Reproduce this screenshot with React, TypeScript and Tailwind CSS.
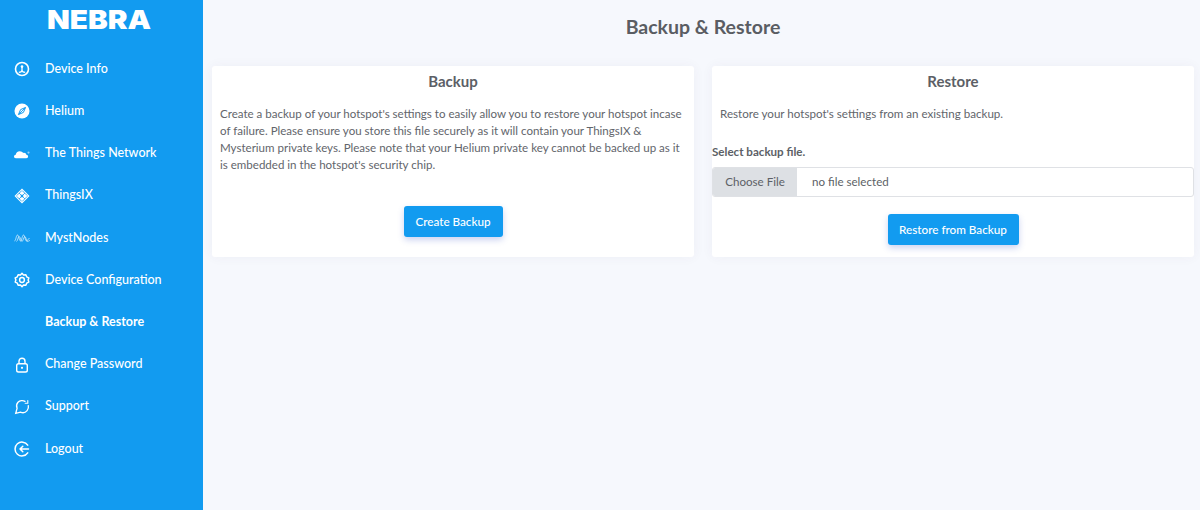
import React from "react";

const font = { fontFamily: 'Lato, sans-serif' };

function Gauge() {
  return (
    <svg width="16" height="16" viewBox="0 0 16 16" fill="none">
      <circle cx="8" cy="8" r="6.500" stroke="#fff" strokeWidth="1.600" />
      <circle cx="8" cy="5.600" r="1.300" fill="#fff" />
      <path d="M8 6v3.200c0 1.100-1.400 2-3.200 2.200M8 9.200c0 1.100 1.400 2 3.200 2.200" stroke="#fff" strokeWidth="1.300" />
    </svg>
  );
}
function Compass() {
  return (
    <svg width="16" height="16" viewBox="0 0 16 16">
      <circle cx="8" cy="8" r="7.500" fill="#fff" />
      <path d="M11.600 4.400 9.400 9.400 4.400 11.600 6.600 6.600Z" fill="none" stroke="#129bf0" strokeWidth="1" />
      <path d="M5 11 11 5" stroke="#129bf0" strokeWidth="0.900" />
    </svg>
  );
}
function Cloud() {
  return (
    <svg width="16" height="16" viewBox="0 0 16 16">
      <path d="M1.800 13.200C.7 13.200 0 12.400 0 11.500c0-.9.700-1.700 1.700-1.800C2 8 3.400 6.200 5.800 6.200c1.500 0 2.700.7 3.300 1.800.3-.1.600-.2.900-.2 1.200 0 2.200.9 2.400 2 1 .1 1.700.8 1.700 1.700 0 .9-.7 1.700-1.800 1.700Z" fill="#fff" />
      <circle cx="14.500" cy="7.600" r="1.100" fill="#fff" fillOpacity="0.55" />
    </svg>
  );
}
function Diamonds() {
  return (
    <svg width="16" height="16" viewBox="0 0 16 16">
      <path d="M8 0.500 15.500 8 8 15.500 0.500 8Z" fill="#fff" />
      <path d="M5 5 11 11M8.300 2.700 13.300 7.700M2.700 8.300 7.700 13.300M11 5 5 11M7.700 2.700 2.700 7.700M13.300 8.300 8.300 13.300" stroke="#129bf0" strokeWidth="0.800" />
      <path d="M8 6.300 9.700 8 8 9.700 6.300 8Z" fill="#129bf0" />
    </svg>
  );
}
function Wave() {
  return (
    <svg width="17" height="16" viewBox="0 0 17 16" fill="none" stroke="#fff" strokeOpacity="0.6" strokeWidth="1">
      <path d="M0.500 11c1.500 0 1.500-6 3-6s1.500 6 3 6 1.500-6 3-6 1.500 6 3 6 1.500-3 3-2.500" />
      <path d="M2.500 11.500c1 0 1.500-5 2.700-5s1.500 5 2.800 5 1.500-5 2.800-5 1.500 5 2.700 5 1-1 2.500-1" />
    </svg>
  );
}
function Gear() {
  return (
    <svg width="16" height="16" viewBox="0 0 24 24" fill="none" stroke="#fff" strokeWidth="2.200" strokeLinejoin="round">
      <path d="M12 1.800l2.300 2.700 3.500-.5 1.200 3.300 3.200 1.600-1 3.100 1 3.100-3.200 1.600-1.200 3.300-3.500-.5L12 22.200l-2.300-2.700-3.500.5L5 16.700l-3.200-1.600 1-3.100-1-3.100L5 7.300l1.200-3.300 3.500.5z" />
      <circle cx="12" cy="12" r="3.600" />
    </svg>
  );
}
function Lock() {
  return (
    <svg width="16" height="16" viewBox="0 0 16 16" fill="none" stroke="#fff" strokeWidth="1.400">
      <rect x="2.700" y="6.700" width="10.600" height="8.300" rx="1.800" />
      <path d="M5 6.700V4.200a3 3 0 0 1 6 0v2.500" />
      <circle cx="8" cy="10.800" r="1.100" fill="#fff" stroke="none" />
    </svg>
  );
}
function Support() {
  return (
    <svg width="16" height="16" viewBox="0 0 16 16" fill="none" stroke="#fff" strokeWidth="1.300" strokeLinecap="round">
      <path d="M11 2.400C9 1 5.800 1.300 4 3.300 2.500 5 2.300 7.600 3.100 9.300L1.700 14.300l4.800-1.200c2.200 1 5 .4 6.600-1.500 1.200-1.400 1.600-3.200 1.200-5" />
      <path d="M13.800 1.600v2.600h-2.600" strokeWidth="1.100" />
    </svg>
  );
}
function Logout() {
  return (
    <svg width="16" height="16" viewBox="0 0 16 16" fill="none" stroke="#fff" strokeWidth="1.500" strokeLinecap="round" strokeLinejoin="round">
      <path d="M13.700 4.200A6.900 6.900 0 1 0 13.700 11.800" />
      <path d="M14.500 8H6M8.800 5.200 6 8l2.800 2.800" />
    </svg>
  );
}

const items: { label: string; icon?: React.ReactNode; active?: boolean }[] = [
  { label: "Device Info", icon: <Gauge /> },
  { label: "Helium", icon: <Compass /> },
  { label: "The Things Network", icon: <Cloud /> },
  { label: "ThingsIX", icon: <Diamonds /> },
  { label: "MystNodes", icon: <Wave /> },
  { label: "Device Configuration", icon: <Gear /> },
  { label: "Backup & Restore", active: true },
  { label: "Change Password", icon: <Lock /> },
  { label: "Support", icon: <Support /> },
  { label: "Logout", icon: <Logout /> },
];

const shadow = "shadow-[0_0_12px_rgba(82,63,105,0.05)]";
const btn =
  "h-[31px] rounded-[3px] bg-[#129bf0] text-[11.700px] font-medium text-white shadow-[0_3px_6px_rgba(50,80,200,0.25)]";

export default function App() {
  return (
    <div style={font} className="flex h-[510px] w-[1200px] overflow-hidden bg-[#f6f8fd] text-[#5c5f66]">
      <aside className="flex w-[203px] shrink-0 flex-col bg-[#129bf0] text-white">
        <div className="flex h-[47.900px] items-start pl-[47px] pt-[5px]">
          <span
            style={{ fontFamily: 'Inter, sans-serif' }}
            className="inline-block origin-left scale-x-[1.14] text-[26px] leading-[30px] font-black"
          >
            NEBRA
          </span>
        </div>
        <nav className="flex flex-col">
          {items.map((it) => (
            <div key={it.label} className="flex h-[42.220px] items-center">
              <span className="flex w-[45px] justify-center pr-[1px]">{it.icon}</span>
              <span className={`text-[12.500px] ${it.active ? "font-bold" : "font-medium"}`}>{it.label}</span>
            </div>
          ))}
        </nav>
      </aside>
      <main className="flex flex-1 flex-col pl-[9px] pr-[6px]">
        <h1 className="flex h-[66px] items-start justify-center pt-[14px] text-[19.500px] leading-[26px] font-bold text-[#5a5d63]">
          Backup &amp; Restore
        </h1>
        <div className="grid h-[191px] grid-cols-2 gap-[18px]">
          <section className={`flex flex-col rounded-[3px] bg-white ${shadow}`}>
            <h2 className="pt-[5px] text-center text-[15px] leading-[20px] font-bold">Backup</h2>
            <p className="mt-[14px] pr-[6px] pl-[8px] text-[11.550px] leading-[17px] text-[#62656b]">
              Create a backup of your hotspot's settings to easily allow you to restore your hotspot incase
              of failure. Please ensure you store this file securely as it will contain your ThingsIX &amp;
              Mysterium private keys. Please note that your Helium private key cannot be backed up as it
              is embedded in the hotspot's security chip.
            </p>
            <div className="mt-[33px] flex justify-center">
              <button className={`${btn} w-[99px]`}>Create Backup</button>
            </div>
          </section>
          <section className={`flex flex-col rounded-[3px] bg-white ${shadow}`}>
            <h2 className="pt-[5px] text-center text-[15px] leading-[20px] font-bold">Restore</h2>
            <p className="mt-[14px] px-[8px] text-[11.600px] leading-[17px] text-[#62656b]">
              Restore your hotspot's settings from an existing backup.
            </p>
            <label className="mt-[21px] text-[11.600px] leading-[17px] font-bold">Select backup file.</label>
            <div className="mt-[7px] flex h-[30px] overflow-hidden rounded-[3px] border border-[#dfe1e5] bg-white text-[11.600px]">
              <span className="flex w-[84px] items-center justify-center bg-[#dde0e4]">Choose File</span>
              <span className="flex items-center pl-[15px]">no file selected</span>
            </div>
            <div className="mt-[17px] flex justify-center">
              <button className={`${btn} w-[131px]`}>Restore from Backup</button>
            </div>
          </section>
        </div>
      </main>
    </div>
  );
}
